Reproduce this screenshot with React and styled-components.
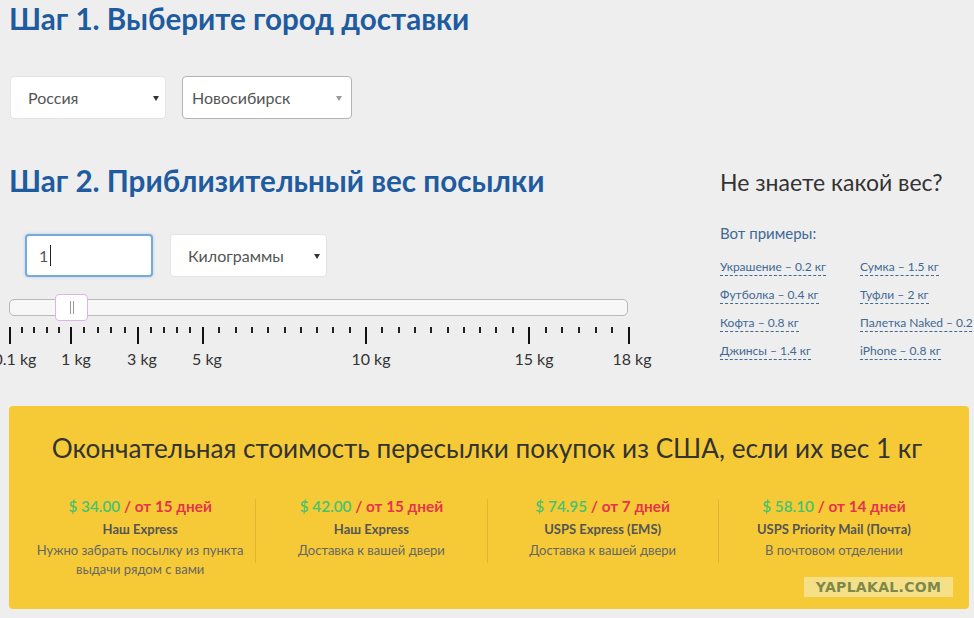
import React from "react";
import styled, { createGlobalStyle } from "styled-components";

const GlobalStyle = createGlobalStyle`
  html, body {
    margin: 0;
    padding: 0;
    background: #eeeeee;
    overflow: hidden;
  }
  body {
    font-family: Lato, "Open Sans", sans-serif;
    color: #333;
  }
`;

const Page = styled.div`
  width: 974px;
  height: 618px;
  padding: 0 5px 0 9px;
  box-sizing: border-box;
  overflow: hidden;
`;

const StepTitle = styled.h2`
  margin: 0;
  padding-top: ${(p) => p.$top || 0}px;
  font-family: Lato, sans-serif;
  font-weight: 700;
  font-size: 29.6px;
  line-height: 34px;
  color: #1f5b9f;
  white-space: nowrap;
`;

const SelectRow = styled.div`
  display: flex;
  gap: ${(p) => p.$gap || 16}px;
  align-items: center;
  margin: ${(p) => p.$margin || "0"};
`;

const SelectBox = styled.div`
  position: relative;
  box-sizing: border-box;
  width: ${(p) => p.$w}px;
  height: 43px;
  padding-left: ${(p) => p.$pad || 17}px;
  display: flex;
  align-items: center;
  background: #fff;
  border: 1px solid ${(p) => (p.$bordered ? "#b4b4b4" : "#e4e4e4")};
  border-radius: 4px;
  font-size: 16px;
  color: #555;
  &::after {
    content: "";
    position: absolute;
    right: ${(p) => (p.$bordered ? 9 : 6)}px;
    top: 19px;
    border-left: 3px solid transparent;
    border-right: 3px solid transparent;
    border-top: 5px solid ${(p) => (p.$bordered ? "#999" : "#333")};
  }
`;

const TextInput = styled.div`
  box-sizing: border-box;
  width: 128px;
  height: 43px;
  display: flex;
  align-items: center;
  padding-left: 12px;
  background: #fff;
  border: 2px solid #76aadb;
  border-radius: 4px;
  box-shadow: 0 0 3px rgba(102, 163, 217, 0.5);
  font-size: 16px;
  color: #555;
`;

const Caret = styled.span`
  display: inline-block;
  width: 1px;
  height: 21px;
  margin-left: 2px;
  background: #222;
`;

const Columns = styled.div`
  display: flex;
  margin-top: 2px;
`;

const LeftCol = styled.div`
  flex: 0 0 711px;
`;

const RightCol = styled.div`
  flex: 1;
  min-width: 0;
  padding-top: 46px;
  white-space: nowrap;
`;

const Track = styled.div`
  position: relative;
  width: 619px;
  height: 17px;
  margin-top: 22px;
  box-sizing: border-box;
  background: #f7f7f7;
  border: 1px solid #b9b9b9;
  border-radius: 5px;
`;

const Handle = styled.div`
  position: absolute;
  left: 45px;
  top: -6px;
  width: 33px;
  height: 27px;
  box-sizing: border-box;
  background: #fff;
  border: 1px solid #dcb6e2;
  border-radius: 4px;
  display: flex;
  justify-content: center;
  align-items: center;
  gap: 2px;
  & > i {
    display: block;
    width: 1px;
    height: 13px;
    background: #999;
  }
`;

const Scale = styled.div`
  position: relative;
  width: 660px;
  height: 48px;
  margin-top: 11px;
`;

const ScaleLabel = styled.span`
  position: absolute;
  top: 22px;
  transform: translateX(-50%);
  font-size: 16px;
  color: #333;
  white-space: nowrap;
`;

const AsideTitle = styled.div`
  font-size: 23px;
  color: #333;
  line-height: 30px;
`;

const AsideLead = styled.div`
  margin-top: 27px;
  font-size: 15px;
  color: #3f6995;
`;

const ExampleGrid = styled.div`
  display: grid;
  grid-template-columns: 140px auto;
  row-gap: 11px;
  margin-top: 17px;
`;

const Example = styled.span`
  justify-self: start;
  font-size: 12px;
  line-height: 16px;
  color: #3f6995;
  border-bottom: 1px dashed #3f6995;
`;

const ResultBox = styled.div`
  position: relative;
  margin-top: 31px;
  height: 203px;
  box-sizing: border-box;
  padding: 24px 20px 0 16px;
  background: #f5ca36;
  border-radius: 4px;
`;

const ResultTitle = styled.div`
  text-align: center;
  font-size: 26.2px;
  line-height: 36px;
  color: #333;
  white-space: nowrap;
`;

const Offers = styled.div`
  display: flex;
  margin-top: 29px;
`;

const Offer = styled.div`
  flex: 1;
  text-align: center;
  font-size: 13px;
`;

const Divider = styled.div`
  flex: 0 0 1px;
  height: 64px;
  margin-top: 4px;
  background: #e3b42c;
`;

const Price = styled.div`
  font-size: 15.3px;
  line-height: 23px;
  font-weight: 700;
  color: #e6334d;
  & > b {
    color: #48c26e;
    font-weight: 600;
  }
`;

const OfferName = styled.div`
  font-weight: 700;
  line-height: 23px;
  color: #555;
`;

const OfferNote = styled.div`
  line-height: 19px;
  color: #666;
`;

const Watermark = styled.div`
  position: absolute;
  right: 16px;
  bottom: 12px;
  width: 149px;
  height: 20px;
  background: #f5e088;
  color: #7d884a;
  font-family: "DejaVu Sans", sans-serif;
  font-weight: 700;
  font-size: 14px;
  line-height: 20px;
  text-align: center;
  letter-spacing: 0.3px;
`;

const majors = [0, 61, 128, 193, 356, 519, 619];
const minorCounts = [4, 4, 4, 9, 9, 5];
const scaleLabels = [
  ["0.1 kg", 6],
  ["1 kg", 67],
  ["3 kg", 133],
  ["5 kg", 198],
  ["10 kg", 362],
  ["15 kg", 525],
  ["18 kg", 623],
];

const Ruler = () => {
  const ticks = [];
  majors.forEach((x, i) => {
    ticks.push(<rect key={`M${i}`} x={x} y={0} width={2} height={17} fill="#111" />);
    if (i < minorCounts.length) {
      const n = minorCounts[i];
      const step = (majors[i + 1] - x) / (n + 1);
      for (let k = 1; k <= n; k++) {
        ticks.push(
          <rect key={`m${i}-${k}`} x={Math.round(x + step * k)} y={0} width={2} height={6} fill="#222" />
        );
      }
    }
  });
  return (
    <svg width="640" height="18" style={{ display: "block" }}>
      {ticks}
    </svg>
  );
};

const examples = [
  "Украшение – 0.2 кг",
  "Сумка – 1.5 кг",
  "Футболка – 0.4 кг",
  "Туфли – 2 кг",
  "Кофта – 0.8 кг",
  "Палетка Naked – 0.2 кг",
  "Джинсы – 1.4 кг",
  "iPhone – 0.8 кг",
];

const offers = [
  { price: "$ 34.00", days: "/ от 15 дней", name: "Наш Express", note: ["Нужно забрать посылку из пункта", "выдачи рядом с вами"] },
  { price: "$ 42.00", days: "/ от 15 дней", name: "Наш Express", note: ["Доставка к вашей двери"] },
  { price: "$ 74.95", days: "/ от 7 дней", name: "USPS Express (EMS)", note: ["Доставка к вашей двери"] },
  { price: "$ 58.10", days: "/ от 14 дней", name: "USPS Priority Mail (Почта)", note: ["В почтовом отделении"] },
];

export default function App() {
  return (
    <Page>
      <GlobalStyle />
      <StepTitle $top={2}>Шаг 1. Выберите город доставки</StepTitle>
      <SelectRow $margin="40px 0 0 1px">
        <SelectBox $w={156}>Россия</SelectBox>
        <SelectBox $w={170} $pad={9} $bordered>
          Новосибирск
        </SelectBox>
      </SelectRow>

      <Columns>
        <LeftCol>
          <StepTitle $top={43}>Шаг 2. Приблизительный вес посылки</StepTitle>
          <SelectRow $gap={17} $margin="36px 0 0 16px">
            <TextInput>
              1<Caret />
            </TextInput>
            <SelectBox $w={157}>Килограммы</SelectBox>
          </SelectRow>
          <Track>
            <Handle>
              <i />
              <i />
            </Handle>
          </Track>
          <Scale>
            <Ruler />
            {scaleLabels.map(([t, x]) => (
              <ScaleLabel key={t} style={{ left: x }}>
                {t}
              </ScaleLabel>
            ))}
          </Scale>
        </LeftCol>
        <RightCol>
          <AsideTitle>Не знаете какой вес?</AsideTitle>
          <AsideLead>Вот примеры:</AsideLead>
          <ExampleGrid>
            {examples.map((e) => (
              <Example key={e}>{e}</Example>
            ))}
          </ExampleGrid>
        </RightCol>
      </Columns>

      <ResultBox>
        <ResultTitle>Окончательная стоимость пересылки покупок из США, если их вес 1 кг</ResultTitle>
        <Offers>
          {offers.map((o, i) => (
            <React.Fragment key={i}>
              {i > 0 && <Divider />}
              <Offer>
                <Price>
                  <b>{o.price}</b> {o.days}
                </Price>
                <OfferName>{o.name}</OfferName>
                {o.note.map((n) => (
                  <OfferNote key={n}>{n}</OfferNote>
                ))}
              </Offer>
            </React.Fragment>
          ))}
        </Offers>
        <Watermark>YAPLAKAL.COM</Watermark>
      </ResultBox>
    </Page>
  );
}
